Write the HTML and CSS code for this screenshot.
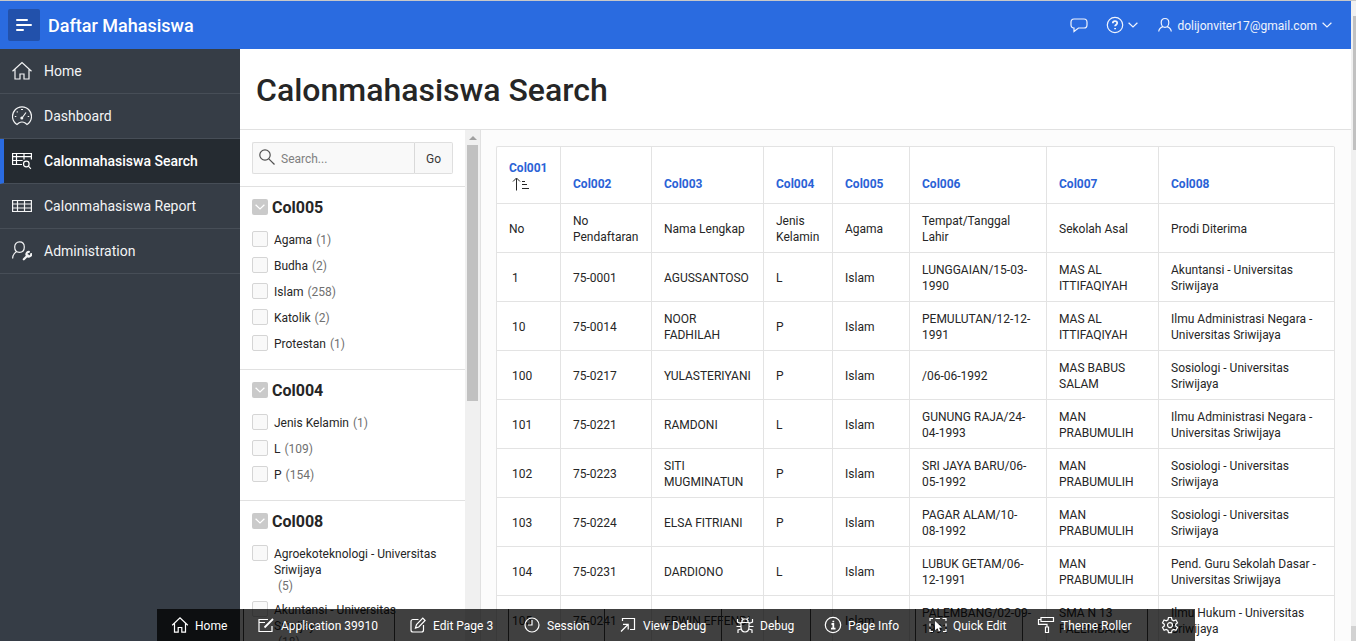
FILE: index.html
```html
<!DOCTYPE html>
<html lang="id">
<head>
<meta charset="utf-8">
<title>Calonmahasiswa Search</title>
<link rel="stylesheet" href="styles.css">
</head>
<body>
<svg class="defs" aria-hidden="true">
  <symbol id="home" viewBox="0 0 20 20"><path d="M.5 10.2 10 1.500l9.500 8.700M3 8.500v9.500h5v-5h4v5h5V8.500"/></symbol>
  <symbol id="chev" viewBox="0 0 10 6"><path d="M.6.800 5 5l4.400-4.200"/></symbol>
</svg>
<header class="header">
  <button class="burger"><svg width="16" height="14" viewBox="0 0 16 14"><path d="M1 2h10M1 7h14M1 12h6"/></svg></button>
  <span class="brand">Daftar Mahasiswa</span>
  <nav class="tools">
    <svg class="bubble" width="18" height="15" viewBox="0 0 18 15"><path d="M4 1h10c2 0 3 1.500 3 3.300v2.400c0 2-1 3.300-3 3.300H8.500L4 13.500V10C2 10 1 8.700 1 6.700V4.300C1 2.500 2 1 4 1z"/></svg>
    <svg class="help" width="18" height="18" viewBox="0 0 18 18"><circle cx="9" cy="9" r="7.700"/><path class="bold" d="M6.800 7.300c0-1.500 1-2.200 2.200-2.200s2.200.8 2.200 2c0 1.600-2.100 1.600-2.100 3.200M9.100 11.900v1.400"/></svg>
    <svg class="chev" width="10" height="6"><use href="#chev"/></svg>
    <svg class="user" width="14" height="16" viewBox="0 0 14 16"><path d="M7 1.500c2.300 0 3.800 1.500 3.800 4S9.300 10.300 7 10.300 3.200 8 3.200 5.500s1.500-4 3.800-4zM4.800 9.600C2.500 10.500 1 11.500.7 14.500M9.200 9.600c2.300.9 3.800 1.900 4.100 4.900"/></svg>
    <span class="email">dolijonviter17@gmail.com</span>
    <svg class="chev" width="10" height="6"><use href="#chev"/></svg>
  </nav>
</header>
<div class="body">
  <aside class="nav">
    <a class="nav-item"><svg viewBox="0 0 20 20"><use href="#home"/></svg>Home</a>
    <a class="nav-item"><svg viewBox="0 0 20 20"><path d="M5 18.500A9.500 9.500 0 1 1 15 18.500l-1.800-1.500a6 6 0 0 0-6.400 0zM14 6.500 10 12M9 3.500h2M2.800 10.500h1.500M15.700 10.500h1.500M4.800 5.500l.8.800"/><circle class="solid" cx="9.800" cy="12" r="1.500"/></svg>Dashboard</a>
    <a class="nav-item current"><svg viewBox="0 0 20 20"><path d="M10 13.500H.6V2.500h18.800v6M.6 5.700h18.800M.6 9.500h10M4.500 2.500v11M12 2.500v6"/><circle cx="14.300" cy="13" r="2.800"/><path d="m16.400 15.200 2.500 2.600"/></svg>Calonmahasiswa Search</a>
    <a class="nav-item"><svg viewBox="0 0 20 20"><path d="M.6 4.500h18.800v11H.6zM.6 8h18.800M.6 12h18.800M5.500 4.500v11M12.500 4.500v11"/></svg>Calonmahasiswa Report</a>
    <a class="nav-item"><svg viewBox="0 0 20 20"><path d="M7.500.8c3 0 4.800 2.200 4.800 5.200s-1.800 5.300-4.800 5.300S2.700 9 2.700 6 4.500.8 7.500.8zM4.700 10.500C2.200 12 .6 13.300.6 17.500"/><path class="wrench" d="m11.800 18.300 4-4M16.900 10.800a2.400 2.400 0 1 0 2.300 2.300"/></svg>Administration</a>
  </aside>
  <main class="main">
    <div class="title-bar"><h1>Calonmahasiswa Search</h1></div>
    <div class="content">
      <section class="facets">
        <div class="facet-list">
          <div class="search">
            <div class="field"><svg width="16" height="16" viewBox="0 0 16 16"><circle cx="6" cy="6" r="5.200"/><path d="m9.800 9.800 5.700 5.700"/></svg>Search...</div>
            <button class="go">Go</button>
          </div>
          <div class="facet">
            <h2><i><svg width="10" height="6"><use href="#chev"/></svg></i><span>Col005</span></h2>
            <label><b></b><span>Agama <em>(1)</em></span></label>
            <label><b></b><span>Budha <em>(2)</em></span></label>
            <label><b></b><span>Islam <em>(258)</em></span></label>
            <label><b></b><span>Katolik <em>(2)</em></span></label>
            <label><b></b><span>Protestan <em>(1)</em></span></label>
          </div>
          <div class="facet">
            <h2><i><svg width="10" height="6"><use href="#chev"/></svg></i><span>Col004</span></h2>
            <label><b></b><span>Jenis Kelamin <em>(1)</em></span></label>
            <label><b></b><span>L <em>(109)</em></span></label>
            <label><b></b><span>P <em>(154)</em></span></label>
          </div>
          <div class="facet">
            <h2><i><svg width="10" height="6"><use href="#chev"/></svg></i><span>Col008</span></h2>
            <label><b></b><span>Agroekoteknologi - Universitas<br>Sriwijaya<br><em class="wrapped">(5)</em></span></label>
            <label><b></b><span>Akuntansi - Universitas<br>Sriwijaya<br><em class="wrapped">(18)</em></span></label>
          </div>
        </div>
        <div class="scroll"><svg class="arrow" width="8" height="4"><path d="M0 4 4 0l4 4z"/></svg><div class="thumb"></div><svg class="arrow down" width="8" height="4"><path d="M0 0h8L4 4z"/></svg></div>
      </section>
      <section class="report">
        <table>
          <colgroup><col class="c1"><col class="c2"><col class="c3"><col class="c4"><col class="c5"><col class="c6"><col class="c7"><col class="c8"></colgroup>
          <thead><tr><th>Col001<br><svg class="sort" width="17" height="14" viewBox="0 0 17 14"><path d="M4.500 13.500V1.500M1 4.500l3.500-3.500L8 4.500M10 4.500h3M10 7.500h5M10 11.500h7"/></svg></th><th>Col002</th><th>Col003</th><th>Col004</th><th>Col005</th><th>Col006</th><th>Col007</th><th>Col008</th></tr></thead>
          <tbody>
            <tr><td>No</td><td>No<br>Pendaftaran</td><td>Nama Lengkap</td><td>Jenis<br>Kelamin</td><td>Agama</td><td>Tempat/Tanggal<br>Lahir</td><td>Sekolah Asal</td><td>Prodi Diterima</td></tr>
            <tr><td>&nbsp;1</td><td>75-0001</td><td>AGUSSANTOSO</td><td>L</td><td>Islam</td><td>LUNGGAIAN/15-03-<br>1990</td><td>MAS AL<br>ITTIFAQIYAH</td><td>Akuntansi - Universitas<br>Sriwijaya</td></tr>
            <tr><td>&nbsp;10</td><td>75-0014</td><td>NOOR<br>FADHILAH</td><td>P</td><td>Islam</td><td>PEMULUTAN/12-12-<br>1991</td><td>MAS AL<br>ITTIFAQIYAH</td><td>Ilmu Administrasi Negara -<br>Universitas Sriwijaya</td></tr>
            <tr><td>&nbsp;100</td><td>75-0217</td><td>YULASTERIYANI</td><td>P</td><td>Islam</td><td>/06-06-1992</td><td>MAS BABUS<br>SALAM</td><td>Sosiologi - Universitas<br>Sriwijaya</td></tr>
            <tr><td>&nbsp;101</td><td>75-0221</td><td>RAMDONI</td><td>L</td><td>Islam</td><td>GUNUNG RAJA/24-<br>04-1993</td><td>MAN<br>PRABUMULIH</td><td>Ilmu Administrasi Negara -<br>Universitas Sriwijaya</td></tr>
            <tr><td>&nbsp;102</td><td>75-0223</td><td>SITI<br>MUGMINATUN</td><td>P</td><td>Islam</td><td>SRI JAYA BARU/06-<br>05-1992</td><td>MAN<br>PRABUMULIH</td><td>Sosiologi - Universitas<br>Sriwijaya</td></tr>
            <tr><td>&nbsp;103</td><td>75-0224</td><td>ELSA FITRIANI</td><td>P</td><td>Islam</td><td>PAGAR ALAM/10-<br>08-1992</td><td>MAN<br>PRABUMULIH</td><td>Sosiologi - Universitas<br>Sriwijaya</td></tr>
            <tr><td>&nbsp;104</td><td>75-0231</td><td>DARDIONO</td><td>L</td><td>Islam</td><td>LUBUK GETAM/06-<br>12-1991</td><td>MAN<br>PRABUMULIH</td><td>Pend. Guru Sekolah Dasar -<br>Universitas Sriwijaya</td></tr>
            <tr><td>&nbsp;105</td><td>75-0241</td><td>ERWIN EFFENDI</td><td>L</td><td>Islam</td><td>PALEMBANG/02-09-<br>1991</td><td>SMA N 13<br>PALEMBANG</td><td>Ilmu Hukum - Universitas<br>Sriwijaya</td></tr>
          </tbody>
        </table>
      </section>
    </div>
  </main>
</div>
<div class="window-scroll"><div class="window-thumb"></div><div class="window-end"></div></div>
<footer class="devbar">
  <a class="d1"><svg viewBox="0 0 18 18"><path d="M1.200 9.300 9 1.800l7.800 7.500M3.500 7.500v8.700h3.700v-4.700h3.600v4.700h3.700V7.500"/></svg>Home</a>
  <a class="d2"><svg viewBox="0 0 18 18"><path d="M11 3.500H2v12h13V10M2 6.500h6"/><path class="bold" d="m7.500 11.500 8.500-8.500"/></svg>Application 39910</a>
  <a class="d3"><svg viewBox="0 0 18 18"><path d="M9.500 3.500H4a2 2 0 0 0-2 2V14a2 2 0 0 0 2 2h8.500a2 2 0 0 0 2-2V9M6.500 12l1-3.500 6.300-6.300 2.300 2.300L9.800 11z"/></svg>Edit Page 3</a>
  <a class="d4"><svg viewBox="0 0 18 18"><circle cx="9" cy="9" r="7"/><path d="M9 4v5H5"/></svg>Session</a>
  <a class="d5"><svg viewBox="0 0 18 18"><path d="M3.500 5V2.500h12v11H11M2 15.500l7-7M4 8.300h5.200v5.200"/></svg>View Debug</a>
  <a class="d6"><svg viewBox="0 0 18 18"><path d="M5 6.500h8V11c0 3-1.500 5-4 5s-4-2-4-5zM6 6.300V4.500l1.500-1.500h3L12 4.500v1.800M6.500 3 5.500 1.500M11.500 3l1-1.500M5 7.500 1.500 6V3M13 7.500 16.500 6V3M5 10.500H.5M13 10.500h4.500M5.500 13 2 14v3M12.500 13l3.500 1v3"/></svg>Debug</a>
  <a class="d7"><svg viewBox="0 0 18 18"><circle cx="9" cy="9" r="7.700"/><path class="bold" d="M9.300 4.800v1.400M7.500 8h1.800v4.500M7 12.700h4.500"/></svg>Page Info</a>
  <a class="d8"><svg viewBox="0 0 18 18"><path d="M1 5V2.500h3M6.500 2.500H11M13.500 2.500H17V5M17 7.500v3M17 13v2.500h-3M4 15.500H1V13M1 10.500v-3"/><path class="solid" d="m6 5 7 6.500-3 .2 1.500 3-1.600.8-1.500-3.200L6 14.300z"/></svg>Quick Edit</a>
  <a class="d9"><svg viewBox="0 0 18 18"><path d="M4 1.500h12.500v4H4zM4 3.500H1.500v4.800h8.500V11M8.500 11h3v5.500h-3z"/></svg>Theme Roller</a>
  <a class="d10"><svg viewBox="0 0 18 18"><path d="m7.500 1.500-.5 2.300-1.700 1-2.200-.8-1.600 2.800L3.300 8.300v1.700l-1.800 1.500 1.600 2.700 2.200-.7 1.700 1 .5 2.200h3l.5-2.200 1.700-1 2.200.7 1.600-2.700L14.700 10V8.300l1.800-1.500L14.900 4l-2.200.8-1.700-1-.5-2.300z"/><circle cx="9" cy="9.100" r="2.500"/></svg></a>
</footer>
</body>
</html>
```

FILE: styles.css
```css
* { box-sizing: border-box; }
body { margin: 0; height: 641px; overflow: hidden; display: flex; flex-direction: column; border-top: 1px solid #c8c8c8; font: 12px/16px Roboto, sans-serif; color: #262626; background: #fff; }
svg { fill: none; stroke: currentColor; stroke-width: 1.2; flex: none; display: block; }
svg .solid { fill: currentColor; stroke: none; }
svg .bold { stroke-width: 1.8; }
button { font: inherit; color: inherit; border: 0; padding: 0; margin: 0; }
.defs { position: absolute; width: 0; height: 0; }

.header { height: 48px; width: 1351px; flex: none; display: flex; align-items: center; padding: 0 19px 0 8px; background: #2a6be0; color: #fff; }
.burger { width: 32px; height: 32px; border-radius: 2px; background: #2251ab; color: #fff; display: grid; place-items: center; }
.burger svg { stroke-width: 2; stroke-linecap: round; }
.brand { margin-left: 8px; padding-top: 2px; font-size: 18px; font-weight: 500; line-height: 24px; }
.tools { margin-left: auto; display: flex; align-items: center; color: #f0f4fd; }
.bubble { margin-right: 18px; }
.help { margin-right: 4px; }
.user { margin: 0 5px 0 20px; }
.email { font-size: 12px; margin-right: 5px; padding-top: 1px; }

.body { display: flex; width: 1351px; height: 592px; flex: none; }
.nav { width: 240px; background: #363d46; color: #f3f4f5; flex: none; }
.nav-item { height: 45px; display: flex; align-items: center; gap: 12px; padding: 0 12px; border-bottom: 1px solid #474e57; font-size: 14px; line-height: 20px; }
.nav-item svg { width: 20px; height: 20px; }
.nav-item.current { background: #252b31; font-weight: 500; color: #fff; padding-left: 8px; border-left: 4px solid #2a6be0; }
svg .wrench { stroke-width: 2.2; stroke-linecap: round; }

.main { width: 1111px; display: flex; flex-direction: column; }
.title-bar { height: 81px; flex: none; border-bottom: 1px solid #e1e1e1; padding: 21px 16px 0; }
h1 { margin: 0; font-size: 32px; line-height: 40px; font-weight: 500; }
.content { display: flex; height: 511px; overflow: hidden; }
.facets { width: 241px; display: flex; border-right: 1px solid #e1e1e1; flex: none; }
.facet-list { width: 225px; height: 511px; overflow: hidden; }
.search { height: 57px; padding: 12px; display: flex; border-bottom: 1px solid #e1e1e1; }
.field { width: 163px; height: 32px; display: flex; align-items: center; gap: 6px; padding: 1px 0 0 6px; border: 1px solid #dfdfdf; border-right-color: #d9d9d9; border-radius: 2px 0 0 2px; background: #f9f9f9; color: #808080; }
.field svg { color: #505050; margin-top: -3px; }
.go { width: 38px; height: 32px; border: 1px solid #dfdfdf; border-left: 0; border-radius: 0 2px 2px 0; background: #f8f8f8; color: #383838; padding-top: 1px; }
.facet { padding: 8px 12px 12px; border-bottom: 1px solid #e1e1e1; }
h2 { margin: 0 0 8px; height: 24px; display: flex; align-items: center; gap: 4px; font-size: 16px; line-height: 24px; font-weight: 700; }
h2 span { padding-top: 2px; }
h2 i { width: 16px; height: 16px; border-radius: 2px; display: grid; place-items: center; background: #cacaca; color: #fff; }
label { display: flex; gap: 6px; padding: 5px 0 3px; min-height: 26px; }
label b { width: 16px; height: 16px; margin-top: -1px; flex: none; border: 1px solid #d5d5d5; border-radius: 2px; background: #f9f9f9; }
label em { font-style: normal; color: #707070; }
.facet label em { margin-left: 1px; }
.facet label .wrapped { margin-left: 4px; }
.facet label span { white-space: nowrap; }

.scroll { width: 15px; background: #f0f0f0; display: flex; flex-direction: column; align-items: center; padding: 6px 0 7px; }
.arrow { fill: #a0a0a0; stroke: none; }
.thumb { margin: 5px 2px 0 2px; width: 11px; height: 256px; background: #c1c1c1; }
.arrow.down { margin-top: auto; fill: #505050; }

.report { flex: 1; background: #fcfcfc; padding: 16px 0 0 15px; }
table { width: 839px; table-layout: fixed; border-collapse: separate; border-spacing: 0; border: 1px solid #e3e3e3; border-width: 1px 0 0 1px; border-radius: 2px 2px 0 0; background: #fff; }
th, td { padding: 9px 0 7px 12px; height: 49px; border: 1px solid #e3e3e3; border-width: 0 1px 1px 0; text-align: left; white-space: nowrap; overflow: hidden; }
th { height: 57px; padding: 12px 0 11px 12px; vertical-align: bottom; color: #2a62d6; font-weight: 700; }
.sort { margin: 1px 0 1px 3px; color: #262626; stroke-width: 1; }
.c1 { width: 64px; }
.c2 { width: 91px; }
.c3 { width: 112px; }
.c4 { width: 69px; }
.c5 { width: 77px; }
.c6 { width: 137px; }
.c7 { width: 112px; }
.c8 { width: 176px; }

.window-scroll { position: absolute; right: 0; top: 1px; width: 5px; height: 640px; background: #f0f0f0; display: flex; flex-direction: column; justify-content: space-between; padding-top: 15px; }
.window-thumb { height: 134px; margin-left: 2px; background: #c1c1c1; }
.window-end { height: 15px; background: #d2d2d2; }

.devbar { position: absolute; left: 157px; top: 609px; width: 1038px; height: 32px; display: flex; background: rgba(0, 0, 0, .75); color: #fff; }
.devbar a { display: flex; align-items: center; gap: 6px; padding-left: 14px; border-right: 1px solid #111; white-space: nowrap; padding-top: 1px; }
.devbar svg { width: 18px; height: 18px; margin-top: -1px; }
.d1 { width: 87px; }
.d2 { width: 151px; }
.d3 { width: 114px; }
.d4 { width: 96px; }
.d5 { width: 117px; }
.d6 { width: 89px; }
.d7 { width: 105px; }
.d8 { width: 107px; }
.d9 { width: 125px; }
.devbar .d2, .devbar .d7, .devbar .d8 { padding-left: 13px; }
.devbar .d10 { border: 0; padding-left: 13px; }
```
